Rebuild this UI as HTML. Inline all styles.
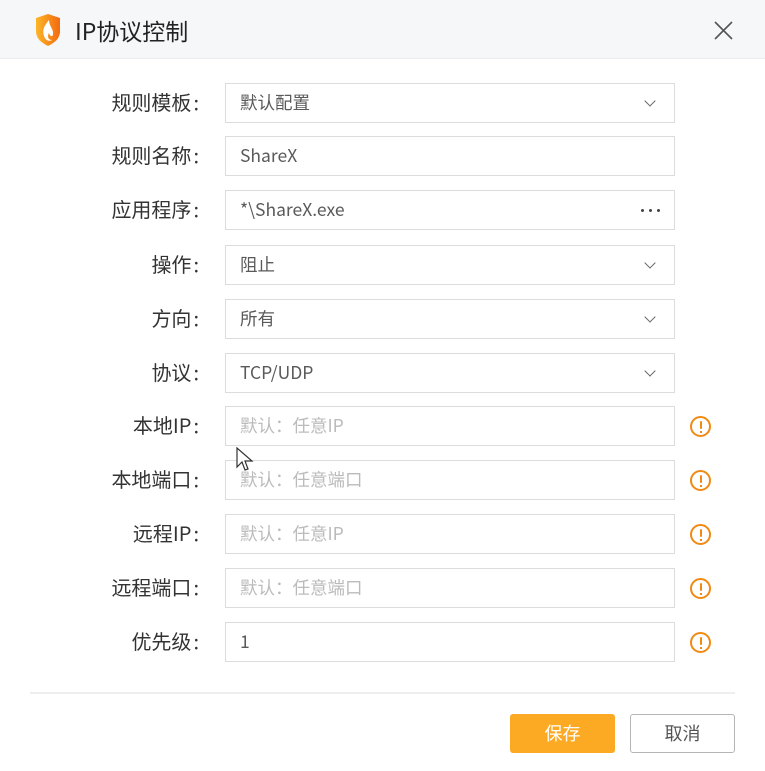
<!DOCTYPE html><html><head><meta charset="utf-8"><style>
body{margin:0;width:765px;height:771px;background:#fff;font-family:"Noto Sans CJK SC","Liberation Sans",sans-serif;position:relative;overflow:hidden}
.hd{position:absolute;left:0;top:0;width:765px;height:58px;background:#f5f7f8;border-bottom:1px solid #ececec}
.t{position:absolute;left:75px;top:12px;font-size:23px;color:#222;line-height:36px}
.lb{position:absolute;right:566px;font-size:20px;color:#333;height:40px;line-height:38px}
.lb i{font-style:normal;margin-left:2px}
.f{position:absolute;left:225px;width:450px;height:40px;border:1px solid #dcdcdc;font-size:17.5px;color:#5a5a5a;padding-left:14px;box-sizing:border-box;line-height:38px}
.ph{color:#bbb}
.ar{position:absolute;right:20px;top:13px;width:7px;height:7px;border-right:1.5px solid #666;border-bottom:1.5px solid #666;transform:rotate(45deg)}
.w{position:absolute;left:690px;width:21px;height:21px;border:2px solid #f08a13;border-radius:50%;box-sizing:border-box}
.w:before{content:"";position:absolute;left:7.5px;top:3px;width:2px;height:8px;background:#f08a13;border-radius:1px}
.w:after{content:"";position:absolute;left:7.5px;top:12.5px;width:2px;height:2px;background:#f08a13}
.dots{position:absolute;right:14px;top:18px;width:3px;height:3px;background:#444;border-radius:50%;box-shadow:-8px 0 #444,-16px 0 #444}
</style></head><body>
<div class="hd">
<svg style="position:absolute;left:34px;top:14px" width="28" height="32" viewBox="0 0 28 32"><defs><linearGradient id="g" x1="0" x2="1"><stop offset="0" stop-color="#fdb628"/><stop offset="1" stop-color="#f26a10"/></linearGradient></defs><path d="M2 4 L14 0 L26 4 L26 17 C26 25 20 29 14 32 C8 29 2 25 2 17Z" fill="url(#g)"/><path d="M15 6 C10 12 8 16 10 22 C11 26 15 28 18 26 C14 26 13 22 15 19 C16 23 19 23 19 20 C20 16 15 12 15 6Z" fill="#fff"/></svg>
<div class="t">IP协议控制</div>
<svg style="position:absolute;left:714px;top:21px" width="19" height="19" viewBox="0 0 19 19"><path d="M1 1L18 18M18 1L1 18" stroke="#555" stroke-width="1.6"/></svg>
</div>

<div class="lb" style="top:83px">规则模板<i>:</i></div><div class="f" style="top:83px">默认配置<span class="ar"></span></div>
<div class="lb" style="top:136px">规则名称<i>:</i></div><div class="f" style="top:136px">ShareX</div>
<div class="lb" style="top:190px">应用程序<i>:</i></div><div class="f" style="top:190px">*\ShareX.exe<span class="dots"></span></div>
<div class="lb" style="top:245px">操作<i>:</i></div><div class="f" style="top:245px">阻止<span class="ar"></span></div>
<div class="lb" style="top:299px">方向<i>:</i></div><div class="f" style="top:299px">所有<span class="ar"></span></div>
<div class="lb" style="top:353px">协议<i>:</i></div><div class="f" style="top:353px">TCP/UDP<span class="ar"></span></div>
<div class="lb" style="top:406px">本地IP<i>:</i></div><div class="f ph" style="top:406px">默认：任意IP</div><div class="w" style="top:416px"></div>
<div class="lb" style="top:460px">本地端口<i>:</i></div><div class="f ph" style="top:460px">默认：任意端口</div><div class="w" style="top:470px"></div>
<div class="lb" style="top:514px">远程IP<i>:</i></div><div class="f ph" style="top:514px">默认：任意IP</div><div class="w" style="top:524px"></div>
<div class="lb" style="top:568px">远程端口<i>:</i></div><div class="f ph" style="top:568px">默认：任意端口</div><div class="w" style="top:578px"></div>
<div class="lb" style="top:622px">优先级<i>:</i></div><div class="f" style="top:622px">1</div><div class="w" style="top:632px"></div>

<svg style="position:absolute;left:236px;top:447px" width="18" height="26" viewBox="0 0 18 26"><path d="M1 1L1 20L6 15L9 23L12 22L9 14L16 14Z" fill="#fff" stroke="#333" stroke-width="1.2"/></svg>

<div style="position:absolute;left:30px;top:692px;width:705px;height:2px;background:#eee"></div>
<div style="position:absolute;left:510px;top:714px;width:105px;height:39px;background:#fca923;border-radius:3px;color:#fff;font-size:18px;text-align:center;line-height:39px">保存</div>
<div style="position:absolute;left:630px;top:714px;width:103px;height:37px;border:1px solid #b5b5b5;border-radius:3px;color:#555;font-size:18px;text-align:center;line-height:37px">取消</div>
</body></html>
